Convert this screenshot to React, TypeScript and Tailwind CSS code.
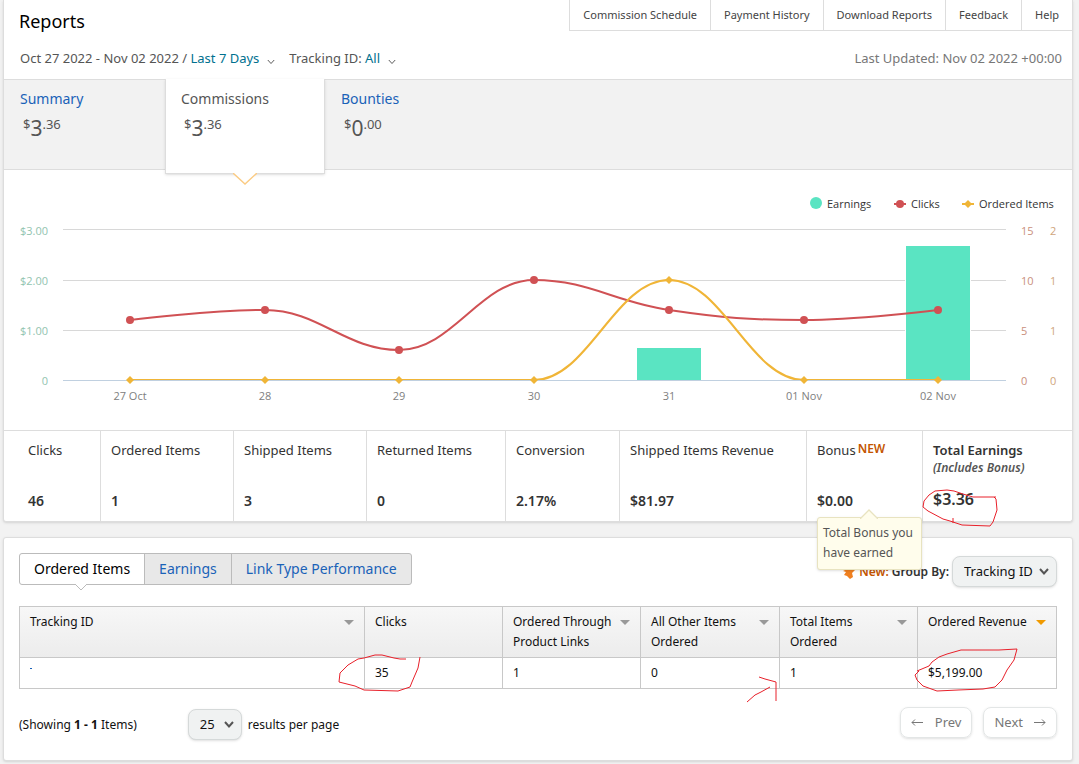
import { useState } from 'react';
import type { ReactNode } from 'react';

const CHART_BASE = 210;
const FIRST_X = 126;
const STEP_X = 134.7;

const days = ['27 Oct', '28', '29', '30', '31', '01 Nov', '02 Nov'];
const earnings = [0, 0, 0, 0, 0.65, 0, 2.68];
const clicks = [6, 7, 3, 10, 7, 6, 7];
const ordered = [0, 0, 0, 0, 1, 0, 0];

const ticks = [
  { y: 60, line: 59.5, dollars: '$3.00', clicks: '15', items: '2' },
  { y: 110, line: 110.5, dollars: '$2.00', clicks: '10', items: '1' },
  { y: 160, line: 160.5, dollars: '$1.00', clicks: '5', items: '1' },
  { y: 210, line: 210.5, dollars: '0', clicks: '0', items: '0' },
];

const xAt = (i: number) => Math.round(FIRST_X + i * STEP_X);

type Point = { x: number; y: number };

const toPoints = (values: number[], unit: number): Point[] =>
  values.map((v, i) => ({ x: xAt(i), y: CHART_BASE - v * unit }));

// Smooth line that never overshoots its neighbouring points
function splinePath(points: Point[]) {
  let d = `M ${points[0].x} ${points[0].y}`;
  let out = points[0];
  for (let i = 1; i < points.length; i++) {
    const prev = points[i - 1];
    const cur = points[i];
    const next = points[i + 1];
    let left = cur;
    let right = cur;
    if (next) {
      const lx = (1.5 * cur.x + prev.x) / 2.5;
      const rx = (1.5 * cur.x + next.x) / 2.5;
      let ly = (1.5 * cur.y + prev.y) / 2.5;
      let ry = (1.5 * cur.y + next.y) / 2.5;
      const correction = ((ry - ly) * (rx - cur.x)) / (rx - lx) + cur.y - ry;
      ly += correction;
      ry += correction;
      const low = Math.min(prev.y, cur.y);
      const high = Math.max(prev.y, cur.y);
      if (ly > high) {
        ly = high;
        ry = 2 * cur.y - ly;
      } else if (ly < low) {
        ly = low;
        ry = 2 * cur.y - ly;
      }
      const nextLow = Math.min(next.y, cur.y);
      const nextHigh = Math.max(next.y, cur.y);
      if (ry > nextHigh) {
        ry = nextHigh;
        ly = 2 * cur.y - ry;
      } else if (ry < nextLow) {
        ry = nextLow;
        ly = 2 * cur.y - ry;
      }
      left = { x: lx, y: ly };
      right = { x: rx, y: ry };
    }
    d += ` C ${out.x} ${out.y} ${left.x} ${left.y} ${cur.x} ${cur.y}`;
    out = right;
  }
  return d;
}

const diamond = (x: number, y: number) => `M ${x} ${y - 4} L ${x + 4} ${y} L ${x} ${y + 4} L ${x - 4} ${y} Z`;

function Chart() {
  const clickPoints = toPoints(clicks, 10);
  const orderedPoints = toPoints(ordered, 100);

  return (
    <svg viewBox="0 0 1068 260" className="block w-full font-['Open_Sans',sans-serif] text-[11px]" role="img" aria-label="Commissions by day">
      <g fill="#333">
        <circle cx="812" cy="33" r="6" fill="#5ae4c2" />
        <text x="823" y="38">Earnings</text>
        <path d="M 890 34 H 902" stroke="#d05154" strokeWidth="2" />
        <circle cx="896" cy="34" r="4" fill="#d05154" />
        <text x="907" y="38">Clicks</text>
        <path d="M 958 34 H 970" stroke="#f0b537" strokeWidth="2" />
        <path d={diamond(964, 34)} fill="#f0b537" />
        <text x="975" y="38">Ordered Items</text>
      </g>

      {ticks.map((tick) => (
        <g key={tick.y}>
          {tick.y < CHART_BASE && <path d={`M 59 ${tick.line} H 1002`} stroke="#d8d8d8" />}
          <text x="44" y={tick.y + 5} textAnchor="end" fill="#92c4b0">{tick.dollars}</text>
          <text x="1017" y={tick.y + 5} fill="#c98f7c">{tick.clicks}</text>
          <text x="1046" y={tick.y + 5} fill="#cfa57c">{tick.items}</text>
        </g>
      ))}
      {days.map((day, i) => (
        <text key={day} x={xAt(i)} y="230" textAnchor="middle" fill="#808080">{day}</text>
      ))}

      {earnings.map((v, i) =>
        v > 0 ? (
          <rect
            key={i}
            x={xAt(i) - 32}
            y={CHART_BASE - Math.floor(v * 50)}
            width="64"
            height={Math.floor(v * 50)}
            fill="#5ae4c2"
            stroke="#fff"
            strokeWidth="2"
            paintOrder="stroke"
          />
        ) : null,
      )}
      <path d="M 59 210.5 H 1002" stroke="#c0d0e0" />
      <path d={splinePath(clickPoints)} fill="none" stroke="#d05154" strokeWidth="2" />
      <path d={splinePath(orderedPoints)} fill="none" stroke="#f0b537" strokeWidth="2" />
      <path d="M 59 210.5 H 1002" stroke="#c0d0e0" />
      {clickPoints.map((p) => (
        <circle key={p.x} cx={p.x} cy={p.y} r="4" fill="#d05154" />
      ))}
      {orderedPoints.map((p) => (
        <path key={p.x} d={diamond(p.x, p.y)} fill="#f0b537" />
      ))}
    </svg>
  );
}

function Chevron({ className }: { className: string }) {
  return (
    <svg viewBox="0 0 10 7" className={className} fill="none" stroke="currentColor" aria-hidden="true">
      <path d="M1 1 L5 5.4 L9 1" />
    </svg>
  );
}

function Price({ whole, cents }: { whole: string; cents: string }) {
  return (
    <span className="mt-[5px] flex items-start pl-[3px] text-[13px] leading-5 text-[#555]">
      <span>$</span>
      <span className="pt-1 text-[21px]">{whole}</span>
      <span>.{cents}</span>
    </span>
  );
}

function Stat({ label, value, children }: { label: ReactNode; value: ReactNode; children?: ReactNode }) {
  return (
    <div className="relative flex flex-col justify-between border-r border-[#ddd] pt-[9px] pb-[10px] pl-[10px] text-[13px] leading-5 text-[#333] first:pl-6 last:border-r-0">
      <div>{label}</div>
      <div className="text-sm leading-5 font-semibold">{value}</div>
      {children}
    </div>
  );
}

function BonusTooltip() {
  return (
    <div role="tooltip" className="absolute top-[86px] left-[10px] z-10 w-[105px] rounded-[3px] border border-[#e8e3c0] bg-[#fffdec] px-[5px] pt-[5px] pb-[6px] text-xs leading-5 text-[#555] shadow">
      <svg viewBox="0 0 18 10" className="absolute -top-[9px] left-[42px] h-[10px] w-[18px]" aria-hidden="true">
        <path d="M0 10 L9 1 L18 10" fill="#fffdec" stroke="#e8e3c0" strokeWidth="1.3" />
      </svg>
      Total Bonus you have earned
    </div>
  );
}

// Red pen marks drawn over the report
function Annotations() {
  return (
    <svg className="pointer-events-none absolute top-0 left-0 z-20 h-[764px] w-[1079px]" fill="none" stroke="#e8202a" aria-hidden="true">
      <path d="M996 497 H973 L963 494 L954 491 L947 490 L935 491 L929 495 L924 501 L923 507 L928 511 L943 519 L950 521 L962 525 L990 526 L993 522 L997 510 L996 499 L994 497" />
      <path d="M953 518 V523" />
      <path d="M406 659 H400 L394 658 L382 655 H375 L364 658 L358 659 L348 665 L340 673 L339 682 L355 686 L364 690 L398 691 L410 687 L412 682 L415 675 L418 668 L420 657" />
      <path d="M917 671 L929 666 L932 662 L939 657 L947 654 L961 650 H999 L1017 649 L1014 660 L1007 670 L1002 680 L995 687 L983 689 L958 690 L937 691 L923 686 L917 680 L915 675 L919 671" />
      <path d="M759 677 L765 679 L776 682 V701 M747 702 L755 695 L761 692 L770 687" />
    </svg>
  );
}

const navLinks = ['Commission Schedule', 'Payment History', 'Download Reports', 'Feedback', 'Help'];

const columns = [
  { label: 'Tracking ID', value: '', sort: 'text-[#999]' },
  { label: 'Clicks', value: '35', sort: '' },
  { label: 'Ordered Through Product Links', value: '1', sort: 'text-[#999]' },
  { label: 'All Other Items Ordered', value: '0', sort: 'text-[#999]' },
  { label: 'Total Items Ordered', value: '1', sort: 'text-[#999]' },
  { label: 'Ordered Revenue', value: '$5,199.00', sort: 'text-[#f09a00]' },
];

export default function App() {
  const [groupBy, setGroupBy] = useState('Tracking ID');
  const [perPage, setPerPage] = useState('25');

  return (
    <div className="relative min-h-screen bg-[#f2f2f2] pr-[6px] pb-[3px] pl-[3px] font-['Noto_Sans',sans-serif] text-[13px] leading-5 text-[#111]">
      <section className="rounded-b-[3px] border border-t-0 border-[#ddd] bg-white shadow-sm">
        <header>
          <div className="flex items-start justify-between">
            <h1 className="pt-[7px] pl-[15px] text-lg leading-7 text-black">Reports</h1>
            <nav className="flex h-[31px] border-b border-l border-[#ddd] text-[11px] text-[#444]">
              {navLinks.map((link) => (
                <a key={link} href="#" className="border-r border-[#ddd] px-[13px] pt-[5px] leading-5 last:border-r-0">
                  {link}
                </a>
              ))}
            </nav>
          </div>
          <div className="mt-[13px] flex justify-between pr-[10px] pb-[11px] pl-4 text-[#555]">
            <div className="flex gap-[14px]">
              <span>
                Oct 27 2022 - Nov 02 2022 /{' '}
                <button type="button" className="text-[#00718f]">
                  Last 7 Days
                  <Chevron className="mt-1 ml-2 inline h-[6px] w-2 text-[#333]" />
                </button>
              </span>
              <span>
                Tracking ID:{' '}
                <button type="button" className="text-[#00718f]">
                  All
                  <Chevron className="mt-1 ml-2 inline h-[6px] w-2 text-[#333]" />
                </button>
              </span>
            </div>
            <span className="text-[#777]">Last Updated: Nov 02 2022 +00:00</span>
          </div>
        </header>

        <div className="flex h-[91px] border-y border-[#ddd] bg-[#f2f2f2]">
          <button type="button" className="flex w-[161px] flex-col pt-[9px] pl-4 text-left">
            <span className="text-sm leading-5 text-[#1a62b8]">Summary</span>
            <Price whole="3" cents="36" />
          </button>
          <button type="button" className="relative -mt-px flex h-[95px] w-[160px] flex-col border-r border-b border-l border-[#ddd] bg-white pt-[10px] pl-[15px] text-left shadow-sm">
            <span className="text-sm leading-5 text-[#555]">Commissions</span>
            <Price whole="3" cents="36" />
            <svg viewBox="0 0 24 12" className="absolute top-[94px] left-[67px] h-3 w-6" aria-hidden="true">
              <path d="M0 0 L12 11 L24 0" fill="#fff" stroke="#fbcb83" strokeWidth="1.4" />
            </svg>
          </button>
          <button type="button" className="flex flex-col pt-[9px] pl-4 text-left">
            <span className="text-sm leading-5 text-[#1a62b8]">Bounties</span>
            <Price whole="0" cents="00" />
          </button>
        </div>

        <Chart />

        <div className="grid h-[91px] grid-cols-[97fr_133fr_133fr_139fr_114fr_187fr_116fr_149fr] border-t border-[#ddd]">
          <Stat label="Clicks" value="46" />
          <Stat label="Ordered Items" value="1" />
          <Stat label="Shipped Items" value="3" />
          <Stat label="Returned Items" value="0" />
          <Stat label="Conversion" value="2.17%" />
          <Stat label="Shipped Items Revenue" value="$81.97" />
          <Stat
            label={
              <div className="flex items-start gap-[2px]">
                Bonus <span className="text-xs leading-[18px] font-semibold text-[#c45500]">NEW</span>
              </div>
            }
            value="$0.00"
          >
            <BonusTooltip />
          </Stat>
          <Stat
            label={
              <>
                <strong className="font-semibold">Total Earnings</strong>
                <em className="block text-xs leading-4 font-semibold text-[#555]">(Includes Bonus)</em>
              </>
            }
            value={<span className="block pb-[2px] text-base leading-5">$3.36</span>}
          />
        </div>
      </section>

      <section className="mt-[15px] rounded-[3px] border border-[#ddd] bg-white px-[15px] pt-[15px] pb-[20px] shadow-sm">
        <div className="flex items-start justify-between">
          <div className="flex rounded-[3px] border border-[#bbb] bg-[#e8e8e8] text-sm">
            <button type="button" className="relative rounded-l-[3px] bg-white px-[14px] py-[5px] leading-5 text-black">
              Ordered Items
              <svg viewBox="0 0 12 7" className="absolute -bottom-[7px] left-[55px] h-[7px] w-3" aria-hidden="true">
                <path d="M0 0 L6 6 L12 0" fill="#fff" stroke="#bbb" />
              </svg>
            </button>
            <button type="button" className="border-l border-[#bbb] px-[14px] py-[5px] leading-5 text-[#1a62b8]">
              Earnings
            </button>
            <button type="button" className="border-l border-[#bbb] px-[14px] py-[5px] leading-5 text-[#1a62b8]">
              Link Type Performance
            </button>
          </div>
          <div className="mt-[3px] flex items-center gap-[3px]">
            <svg viewBox="0 0 14 14" className="h-[14px] w-[14px]" fill="#f08020" aria-hidden="true">
              <path d="M1 6 L5 4 L9 1 L14 0 L13 5 L10 8 L11 12 L8 14 L5 11 L2 10 L4 7 Z" />
            </svg>
            <label htmlFor="group-by" className="text-xs font-semibold text-[#333]">
              <span className="text-[#c45500]">New:</span> Group By:
            </label>
            <div className="relative">
              <select
                id="group-by"
                value={groupBy}
                onChange={(e) => setGroupBy(e.target.value)}
                className="block h-[31px] w-[105px] appearance-none rounded-lg border border-[#d5d9d9] bg-[#f0f2f2] pb-[2px] pl-[11px] text-[13px] shadow-sm"
              >
                <option>Tracking ID</option>
              </select>
              <Chevron className="pointer-events-none absolute top-[12px] right-[8px] h-[7px] w-[10px] stroke-2 text-[#555]" />
            </div>
          </div>
        </div>

        <table className="mt-[19px] w-full table-fixed border-collapse text-xs leading-5">
          <colgroup>
            <col />
            <col className="w-[138px]" />
            <col className="w-[138px]" />
            <col className="w-[139px]" />
            <col className="w-[138px]" />
            <col className="w-[139px]" />
          </colgroup>
          <thead>
            <tr className="h-[51px] bg-linear-to-b from-[#f7f7f7] to-[#ececec]">
              {columns.map((col) => (
                <th key={col.label} scope="col" className="border border-[#c8c8c8] px-[10px] pt-[5px] text-left align-top font-normal">
                  <div className="flex justify-between">
                    <span>{col.label}</span>
                    {col.sort && (
                      <svg viewBox="0 0 10 5" className={`mt-2 h-[5px] w-[10px] shrink-0 ${col.sort}`} fill="currentColor" aria-hidden="true">
                        <path d="M0 0 H10 L5 5 Z" />
                      </svg>
                    )}
                  </div>
                </th>
              ))}
            </tr>
          </thead>
          <tbody>
            <tr className="h-[31px]">
              {columns.map((col) => (
                <td key={col.label} className="border border-[#c8c8c8] px-[10px]">
                  {col.value || <span className="block h-[10px] w-[2px] border-t border-[#1a62b8]" />}
                </td>
              ))}
            </tr>
          </tbody>
        </table>

        <div className="mt-[18px] flex items-start justify-between text-xs">
          <div className="mt-[2px] flex items-center">
            <span>
              (Showing <b>1 - 1</b> Items)
            </span>
            <div className="relative mr-[6px] ml-[51px]">
              <select
                id="per-page"
                value={perPage}
                onChange={(e) => setPerPage(e.target.value)}
                className="block h-[31px] w-[54px] appearance-none rounded-lg border border-[#d5d9d9] bg-[#f0f2f2] pl-[11px] text-[13px] shadow-sm"
              >
                <option>25</option>
              </select>
              <Chevron className="pointer-events-none absolute top-[12px] right-[8px] h-[7px] w-[10px] stroke-2 text-[#555]" />
            </div>
            <label htmlFor="per-page">results per page</label>
          </div>
          <div className="flex gap-[11px] text-[13px] text-[#777]">
            <button type="button" className="flex h-[31px] items-center gap-3 rounded-lg border border-[#e3e6e6] px-[10px] shadow-sm">
              <svg viewBox="0 0 12 7" className="h-[7px] w-3" fill="none" stroke="currentColor" aria-hidden="true">
                <path d="M12 3.5 H1 M4 0.5 L1 3.5 L4 6.5" />
              </svg>
              Prev
            </button>
            <button type="button" className="flex h-[31px] items-center gap-[11px] rounded-lg border border-[#e3e6e6] px-[10px] shadow-sm">
              Next
              <svg viewBox="0 0 12 7" className="h-[7px] w-3" fill="none" stroke="currentColor" aria-hidden="true">
                <path d="M0 3.5 H11 M8 0.5 L11 3.5 L8 6.5" />
              </svg>
            </button>
          </div>
        </div>
      </section>

      <Annotations />
    </div>
  );
}
